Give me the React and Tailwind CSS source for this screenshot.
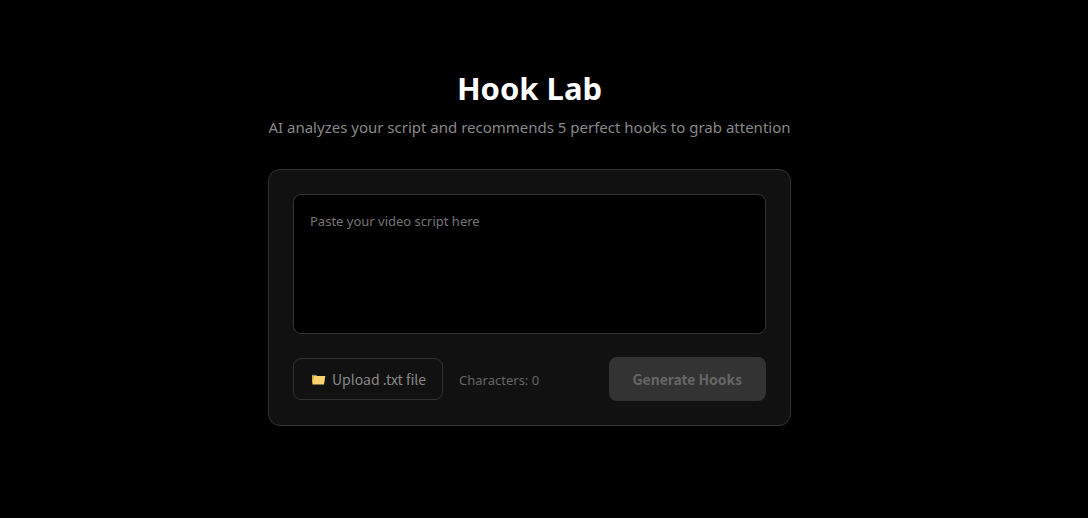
import { useRef, useState } from "react";

function FolderIcon() {
  return (
    <svg className="h-3 w-4 shrink-0" viewBox="0 0 16 12" aria-hidden="true">
      <path d="M2 2h4l1 1h7v3H4.2L2 11z" fill="#e9a92a" />
      <path d="M2.5 1.8h3v1h-3z" fill="#3f8fb0" />
      <path d="M4 3h11.3L14 11.5H2.3z" fill="#ffd271" />
    </svg>
  );
}

export default function App() {
  const [script, setScript] = useState("");
  const fileInput = useRef(null);

  async function loadFile(event) {
    const file = event.target.files[0];
    if (file) setScript(await file.text());
  }

  return (
    <main className="min-h-screen bg-black pt-[68px] pr-[29px] pb-16 font-['Noto_Sans',sans-serif]">
      <div className="mx-auto w-full max-w-[523px]">
        <header className="mb-[30px] text-center">
          <h1 className="mb-2 text-[31px] leading-10 font-bold text-white">Hook Lab</h1>
          <p className="text-[15px] leading-[23px] whitespace-nowrap text-[#888]">
            AI analyzes your script and recommends 5 perfect hooks to grab attention
          </p>
        </header>

        <section className="rounded-xl border border-[#333] bg-[#111] p-6">
          <textarea
            aria-label="Video script"
            placeholder="Paste your video script here"
            value={script}
            onChange={(event) => setScript(event.target.value)}
            className="block h-[140px] w-full resize-none rounded-lg border border-[#333] bg-black p-4 text-[13px] leading-5 text-white outline-none placeholder:text-[#757575]"
          />
          <div className="mt-[23px] flex items-center justify-between">
            <div className="flex items-baseline gap-4">
              <button
                type="button"
                onClick={() => fileInput.current.click()}
                className="flex h-[42px] items-center gap-1.5 rounded-lg border border-[#333] px-4 font-['Noto_Sans_CJK_KR',sans-serif] text-sm text-[#888]"
              >
                <FolderIcon />
                <span>Upload .txt file</span>
              </button>
              <input
                ref={fileInput}
                type="file"
                accept=".txt"
                aria-label="Script file"
                onChange={loadFile}
                className="hidden"
              />
              <span className="text-[13px] leading-5 text-[#666]">
                Characters: {script.length}
              </span>
            </div>
            <button
              type="button"
              disabled={!script}
              className="h-11 rounded-lg bg-[#333] px-6 font-['Noto_Sans_CJK_KR',sans-serif] text-sm font-bold text-[#666]"
            >
              Generate Hooks
            </button>
          </div>
        </section>
      </div>
    </main>
  );
}
